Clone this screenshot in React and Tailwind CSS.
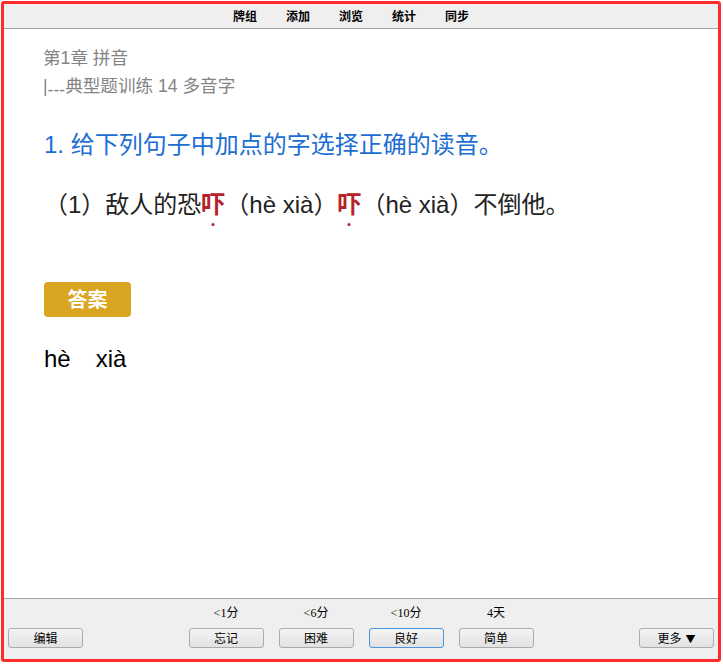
import React from "react";

const cjk = { fontFamily: '"Liberation Sans", "Noto Sans CJK SC", sans-serif' };
const serif = { fontFamily: '"Liberation Serif", "Noto Sans CJK SC", serif' };

function Btn({ children, focus }) {
  return (
    <div
      className={
        "w-[75px] h-[20px] flex items-center justify-center text-[12px] text-black rounded-[3px] border bg-gradient-to-b from-[#f4f4f4] to-[#e2e2e2] " +
        (focus ? "border-[#4a95dc]" : "border-[#acacac]")
      }
      style={{ fontFamily: '"Noto Sans CJK SC", sans-serif' }}
    >
      {children}
    </div>
  );
}

function Col({ label, children, focus }) {
  return (
    <div className="flex flex-col items-center">
      <div className="text-[12px] leading-[14px] h-[14px] text-black mb-[8px]" style={serif}>
        {label}
      </div>
      <Btn focus={focus}>{children}</Btn>
    </div>
  );
}

function Dotted({ children }) {
  return (
    <span className="relative inline-block font-bold text-[#b5222c]">
      {children}
      <span className="absolute left-1/2 -translate-x-1/2 bottom-[-3px] w-[3px] h-[3px] rounded-full bg-[#a8202a]" />
    </span>
  );
}

export default function App() {
  return (
    <div className="w-[723px] h-[664px] bg-white p-[1px]">
      <div className="w-[720px] h-[661px] border-[3px] border-[#fe2b2b] rounded-[3px] flex flex-col overflow-hidden">
        {/* top toolbar */}
        <div className="h-[25px] shrink-0 bg-[#efefef] border-b border-[#a3a3a3] flex items-center pl-[229px] gap-[29px] text-[12px] font-bold text-black pb-[1px]" style={{ fontFamily: '"Noto Sans CJK SC", sans-serif' }}>
          <span>牌组</span>
          <span>添加</span>
          <span>浏览</span>
          <span>统计</span>
          <span>同步</span>
        </div>

        {/* content */}
        <div className="flex-1 bg-white px-[39px] pt-[15px]" style={cjk}>
          <div className="text-[17.6px] leading-[28px] text-[#848484]">第1章 拼音</div>
          <div className="text-[17.6px] leading-[28px] text-[#848484]">
            |<span className="relative top-[4px]">---</span>典型题训练 14 多音字
          </div>

          <div className="mt-[27px] text-[24px] leading-[36px] text-[#1c6ed4] pl-[1px]">
            1. 给下列句子中加点的字选择正确的读音。
          </div>

          <div className="mt-[24px] text-[24px] leading-[36px] text-[#222] pl-[1px]">
            （1）敌人的恐<Dotted>吓</Dotted>（hè xià）<Dotted>吓</Dotted>（hè xià）不倒他。
          </div>

          <div className="mt-[59px] ml-[1px] w-[87px] h-[35px] rounded-[4px] bg-[#daa520] flex items-center justify-center text-white font-bold text-[20px]">
            答案
          </div>

          <div className="mt-[24px] text-[24px] leading-[36px] text-black flex pl-[1px]">
            <span>hè</span>
            <span className="ml-[25px]">xià</span>
          </div>
        </div>

        {/* bottom bar */}
        <div className="h-[61px] shrink-0 bg-[#efefef] border-t border-[#a3a3a3] flex items-start justify-between px-[4px] pt-[7px]">
          <div className="pt-[22px]">
            <Btn>编辑</Btn>
          </div>
          <div className="flex gap-[15px]">
            <Col label="<1分">忘记</Col>
            <Col label="<6分">困难</Col>
            <Col label="<10分" focus>良好</Col>
            <Col label="4天">简单</Col>
          </div>
          <div className="pt-[22px]">
            <Btn>
              <span>更多</span>
              <span className="ml-[4px] text-[10px]">▼</span>
            </Btn>
          </div>
        </div>
      </div>
    </div>
  );
}
